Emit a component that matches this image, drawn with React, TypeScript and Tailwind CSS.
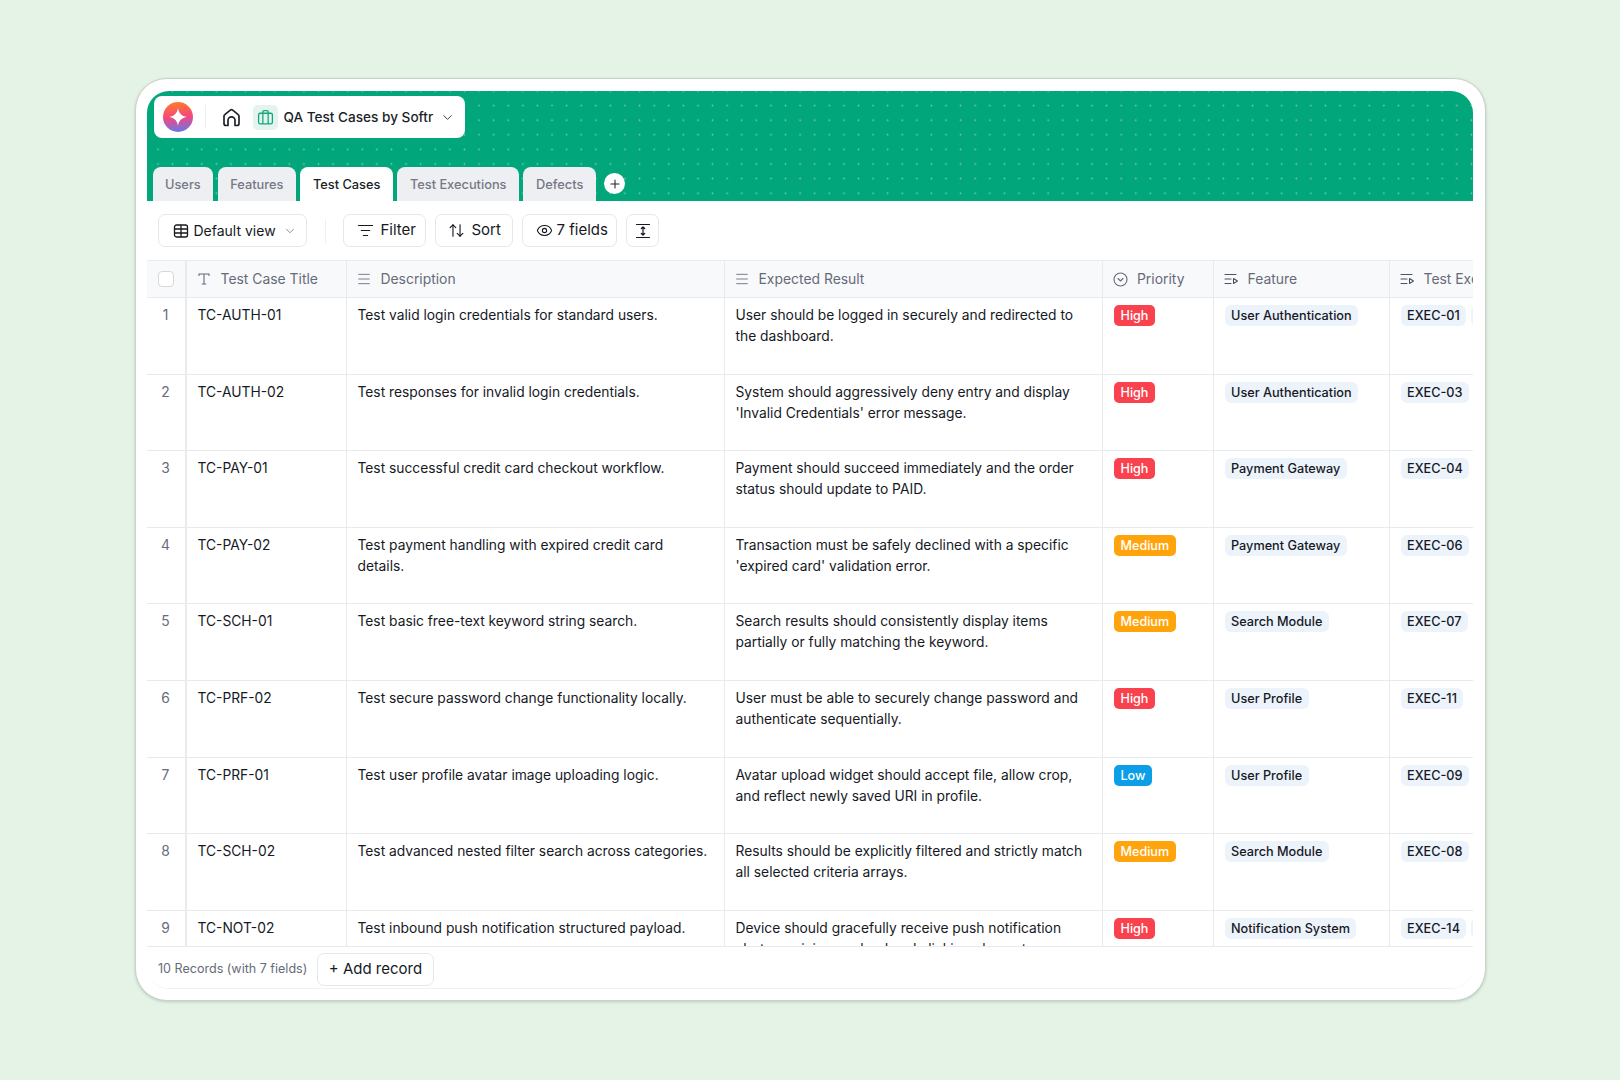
import { ArrowUpDown, ChevronDown, Eye, ListFilter, Menu, Plus } from 'lucide-react';

const rows = [
  { n: 1, title: 'TC-AUTH-01', desc: 'Test valid login credentials for standard users.', result: 'User should be logged in securely and redirected to the dashboard.', priority: 'High', feature: 'User Authentication', exec: 'EXEC-01', more: true },
  { n: 2, title: 'TC-AUTH-02', desc: 'Test responses for invalid login credentials.', result: "System should aggressively deny entry and display 'Invalid Credentials' error message.", priority: 'High', feature: 'User Authentication', exec: 'EXEC-03', more: false },
  { n: 3, title: 'TC-PAY-01', desc: 'Test successful credit card checkout workflow.', result: 'Payment should succeed immediately and the order status should update to PAID.', priority: 'High', feature: 'Payment Gateway', exec: 'EXEC-04', more: false },
  { n: 4, title: 'TC-PAY-02', desc: 'Test payment handling with expired credit card details.', result: "Transaction must be safely declined with a specific 'expired card' validation error.", priority: 'Medium', feature: 'Payment Gateway', exec: 'EXEC-06', more: false },
  { n: 5, title: 'TC-SCH-01', desc: 'Test basic free-text keyword string search.', result: 'Search results should consistently display items partially or fully matching the keyword.', priority: 'Medium', feature: 'Search Module', exec: 'EXEC-07', more: false },
  { n: 6, title: 'TC-PRF-02', desc: 'Test secure password change functionality locally.', result: 'User must be able to securely change password and authenticate sequentially.', priority: 'High', feature: 'User Profile', exec: 'EXEC-11', more: false },
  { n: 7, title: 'TC-PRF-01', desc: 'Test user profile avatar image uploading logic.', result: 'Avatar upload widget should accept file, allow crop, and reflect newly saved URI in profile.', priority: 'Low', feature: 'User Profile', exec: 'EXEC-09', more: true },
  { n: 8, title: 'TC-SCH-02', desc: 'Test advanced nested filter search across categories.', result: 'Results should be explicitly filtered and strictly match all selected criteria arrays.', priority: 'Medium', feature: 'Search Module', exec: 'EXEC-08', more: false },
  { n: 9, title: 'TC-NOT-02', desc: 'Test inbound push notification structured payload.', result: 'Device should gracefully receive push notification alert, receiving payload and clicking element.', priority: 'High', feature: 'Notification System', exec: 'EXEC-14', more: true },
];

const priorityColor: Record<string, string> = {
  High: 'bg-[#f9424e]',
  Medium: 'bg-[#ffa40d]',
  Low: 'bg-[#0c9fe8]',
};

const gridCols = 'grid grid-cols-[40px_160px_378px_378.5px_110.5px_176px_200px]';

function LinkedIcon() {
  return (
    <svg width="16" height="16" viewBox="0 0 16 16" fill="none" stroke="#4b5563" strokeWidth="1.1" strokeLinecap="round" strokeLinejoin="round">
      <path d="M2 3.5h11M2 8h6M2 12.5h6" />
      <path d="M10.5 7.5v5l4-2.5z" />
    </svg>
  );
}

function HeaderCell({ icon, label, border = true }: { icon: React.ReactNode; label: string; border?: boolean }) {
  return (
    <div className={`flex items-center gap-[9px] overflow-hidden whitespace-nowrap pl-[9px] text-[13.9px] text-[#666b78] ${border ? 'border-r border-[#e8eaed]' : ''}`}>
      <span className="flex w-[16px] shrink-0 justify-center">{icon}</span>
      {label}
    </div>
  );
}

function Tab({ label, active }: { label: string; active?: boolean }) {
  return (
    <div className={`flex h-[34px] items-center rounded-t-[8px] px-[12.5px] pt-[1px] text-[12.8px] font-medium ${active ? 'bg-white text-[#1b1f27]' : 'bg-[#eeeff2] text-[#757985]'}`}>
      {label}
    </div>
  );
}

function ToolButton({ children }: { children: React.ReactNode }) {
  return (
    <button className="flex h-[33px] items-center rounded-[7px] border border-[#e6e7ea] bg-white text-[#16191f]">
      {children}
    </button>
  );
}

export default function App() {
  return (
    <div className="flex h-[1080px] w-[1620px] items-start justify-center bg-[#e5f3e6] pt-[78px] font-['Inter',sans-serif]">
      <div className="h-[923px] w-[1351px] rounded-[32px] border border-[#c9d2cb] bg-white pb-[11px] pl-[11px] pr-[12px] pt-[12px] shadow-[0_1px_3px_rgba(60,80,60,0.25)]">
        <div className="flex h-full flex-col overflow-hidden rounded-[22px] border-b border-[#f0f1f3]">
          <div className="flex h-[110px] shrink-0 flex-col justify-between bg-[#02a67b] bg-[radial-gradient(rgba(255,255,255,0.42)_0.8px,transparent_1.1px)] bg-size-[14.6px_14.6px] bg-position-[3.7px_-7.3px] px-[6px]">
            <div className="ml-[1px] mt-[5px] flex h-[42px] w-[311px] items-center rounded-[8px] bg-white pl-[9px]">
              <div className="flex h-[30px] w-[30px] shrink-0 items-center justify-center rounded-full bg-[linear-gradient(175deg,#ff7f22_0%,#f5477c_50%,#5d7bf5_100%)]">
                <svg width="20" height="20" viewBox="0 0 18 18" fill="white">
                  <path d="M9 1c.6 4.6 3.4 7.4 8 8-4.6.6-7.4 3.4-8 8-.6-4.6-3.4-7.4-8-8 4.6-.6 7.4-3.4 8-8z" />
                </svg>
              </div>
              <div className="ml-[12px] h-[24px] w-px bg-[#eceef0]" />
              <svg className="ml-[15px]" width="21" height="21" viewBox="0 0 21 21" fill="none" stroke="#1f232b" strokeWidth="1.7" strokeLinecap="round" strokeLinejoin="round">
                <path d="M7 18.5H5a2 2 0 0 1-2-2V9.2a2 2 0 0 1 .8-1.6l5.5-4.5a2 2 0 0 1 2.4 0l5.5 4.5a2 2 0 0 1 .8 1.6v7.3a2 2 0 0 1-2 2h-2v-5.2a3.5 3.5 0 0 0-7 0z" />
              </svg>
              <div className="ml-[11px] flex h-[25px] w-[25px] shrink-0 items-center justify-center rounded-[5px] bg-[#e3f4ee]">
                <svg width="17" height="17" viewBox="0 0 16 16" fill="none" stroke="#13a67e" strokeWidth="1.2" strokeLinejoin="round">
                  <rect x="1.5" y="4" width="13" height="10" rx="1.5" />
                  <path d="M5.5 4V2.5a1 1 0 0 1 1-1h3a1 1 0 0 1 1 1V4M5.5 4v10M10.5 4v10" />
                </svg>
              </div>
              <span className="ml-[6px] whitespace-nowrap text-[13.6px] font-medium text-[#1b1f27]">QA Test Cases by Softr</span>
              <ChevronDown className="ml-[7px] h-[15px] w-[15px] text-[#3b3f48]" strokeWidth={1.6} />
            </div>
            <div className="flex items-end gap-[4.5px]">
              <Tab label="Users" />
              <Tab label="Features" />
              <Tab label="Test Cases" active />
              <Tab label="Test Executions" />
              <Tab label="Defects" />
              <div className="mb-[7px] ml-[4px] flex h-[21px] w-[21px] items-center justify-center rounded-full bg-white">
                <Plus className="h-[14px] w-[14px] text-[#1f232b]" strokeWidth={1.8} />
              </div>
            </div>
          </div>

          <div className="flex h-[59px] shrink-0 items-center bg-white pl-[11px]">
            <ToolButton>
              <span className="flex w-[147px] items-center pl-[14px]">
                <svg width="16" height="16" viewBox="0 0 16 16" fill="none" stroke="#16191f" strokeWidth="1.3">
                  <rect x="1.5" y="2" width="13" height="12" rx="2" />
                  <path d="M1.5 6h13M1.5 10h13M8 2v12" />
                </svg>
                <span className="ml-[5px] text-[14px]">Default view</span>
                <ChevronDown className="ml-[7px] h-[14px] w-[14px] text-[#7c808a]" strokeWidth={1.5} />
              </span>
            </ToolButton>
            <div className="ml-[18px] mr-[17px] h-[24px] w-px bg-[#eff0f2]" />
            <ToolButton>
              <span className="flex w-[81px] items-center pl-[13px] text-[15px]">
                <ListFilter className="h-[17px] w-[17px]" strokeWidth={1.6} />
                <span className="ml-[7px]">Filter</span>
              </span>
            </ToolButton>
            <div className="w-[9px]" />
            <ToolButton>
              <span className="flex w-[76px] items-center pl-[12px] text-[15px]">
                <ArrowUpDown className="h-[17px] w-[17px]" strokeWidth={1.6} />
                <span className="ml-[7px]">Sort</span>
              </span>
            </ToolButton>
            <div className="w-[9px]" />
            <ToolButton>
              <span className="flex w-[93px] items-center pl-[13px] text-[15px]">
                <Eye className="h-[17px] w-[17px]" strokeWidth={1.5} />
                <span className="ml-[4px]">7 fields</span>
              </span>
            </ToolButton>
            <div className="w-[9.5px]" />
            <ToolButton>
              <span className="flex w-[31px] justify-center">
                <svg width="16" height="16" viewBox="0 0 16 16" fill="none" stroke="#16191f" strokeWidth="1.2" strokeLinecap="round" strokeLinejoin="round">
                  <path d="M1.5 1.5h13M1.5 14.5h13M8 4v8M6.3 5.5 8 3.8l1.7 1.7M6.3 10.5 8 12.2l1.7-1.7" />
                </svg>
              </span>
            </ToolButton>
          </div>

          <div className="min-h-0 flex-1 overflow-hidden">
            <div className={`${gridCols} h-[38px] border-y border-[#e8eaed] bg-[#f8f9fb]`}>
              <div className="flex items-center justify-center border-r-2 border-[#e8eaed]">
                <div className="h-[16px] w-[16px] rounded-[4px] border border-[#d6d8dd] bg-white" />
              </div>
              <HeaderCell
                label="Test Case Title"
                icon={
                  <svg width="14" height="14" viewBox="0 0 14 14" fill="none" stroke="#666b78" strokeWidth="1.1" strokeLinecap="round">
                    <path d="M2 3.5V2h10v1.5M7 2v10M5.2 12h3.6" />
                  </svg>
                }
              />
              <HeaderCell label="Description" icon={<Menu className="h-[16px] w-[16px]" strokeWidth={1.3} />} />
              <HeaderCell label="Expected Result" icon={<Menu className="h-[16px] w-[16px]" strokeWidth={1.3} />} />
              <HeaderCell
                label="Priority"
                icon={
                  <svg width="15" height="15" viewBox="0 0 15 15" fill="none" stroke="#666b78" strokeWidth="1.1" strokeLinecap="round" strokeLinejoin="round">
                    <circle cx="7.5" cy="7.5" r="6.5" />
                    <path d="m5 6.5 2.5 2.5L10 6.5" />
                  </svg>
                }
              />
              <HeaderCell label="Feature" icon={<LinkedIcon />} />
              <HeaderCell label="Test Executions" icon={<LinkedIcon />} border={false} />
            </div>

            {rows.map((row) => (
              <div key={row.n} className={`${gridCols} h-[76.6px] border-b border-[#e8eaed] text-[13.8px] leading-[21px] text-[#16191f]`}>
                <div className="border-r-2 border-[#e8eaed] pt-[7px] text-center text-[#666b78]">{row.n}</div>
                <div className="border-r border-[#e8eaed] px-[11px] pt-[7px]">{row.title}</div>
                <div className="border-r border-[#e8eaed] px-[11px] pt-[7px]">{row.desc}</div>
                <div className="border-r border-[#e8eaed] px-[11px] pt-[7px]">{row.result}</div>
                <div className="flex items-start border-r border-[#e8eaed] pl-[11px] pt-[7px]">
                  <span className={`rounded-[5px] px-[6.5px] text-[12.6px] font-medium leading-[21px] text-white ${priorityColor[row.priority]}`}>
                    {row.priority}
                  </span>
                </div>
                <div className="flex items-start border-r border-[#e8eaed] pl-[11px] pt-[7px]">
                  <span className="whitespace-nowrap rounded-[6px] bg-[#edf3fb] px-[6.5px] text-[12.7px] font-medium leading-[21px]">
                    {row.feature}
                  </span>
                </div>
                <div className="flex items-start gap-[5px] overflow-hidden pl-[11px] pt-[7px]">
                  <span className="whitespace-nowrap rounded-[6px] bg-[#edf3fb] px-[6.5px] text-[12.7px] font-medium leading-[21px]">
                    {row.exec}
                  </span>
                  {row.more && <span className="h-[21px] w-[40px] shrink-0 rounded-[6px] bg-[#edf3fb]" />}
                </div>
              </div>
            ))}
          </div>

          <div className="flex h-[42px] shrink-0 items-center border-t border-[#e8eaed] bg-white pl-[11.5px] pt-[4px]">
            <span className="text-[12.55px] text-[#666b78]">10 Records (with 7 fields)</span>
            <button className="ml-[9.5px] flex h-[33px] items-center rounded-[7px] border border-[#e6e7ea] bg-white px-[11px] text-[15px] text-[#16191f]">
              + Add record
            </button>
          </div>
        </div>
      </div>
    </div>
  );
}
